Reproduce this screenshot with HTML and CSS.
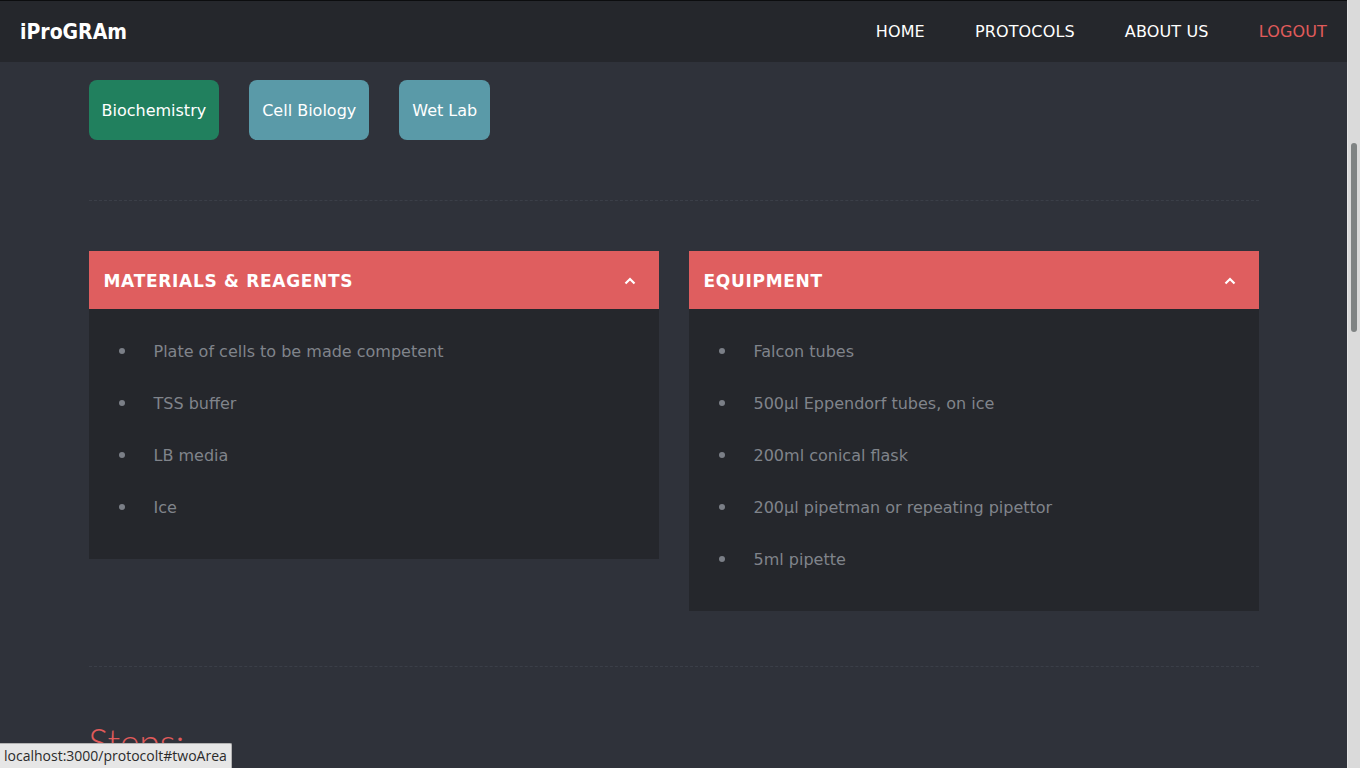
FILE: index.html
```html
<!DOCTYPE html>
<html lang="en">
<head>
<meta charset="utf-8">
<title>iProGRAm – Protocol</title>
<link rel="stylesheet" href="styles.css">
</head>
<body>
  <div class="page">
    <header class="topbar">
      <a class="logo" href="#">iProGRAm</a>
      <nav class="nav">
        <a href="#">HOME</a>
        <a href="#">PROTOCOLS</a>
        <a href="#">ABOUT US</a>
        <a href="#" class="logout">LOGOUT</a>
      </nav>
    </header>

    <main class="container">
      <div class="tags">
        <a class="tag tag-green" href="#">Biochemistry</a>
        <a class="tag tag-teal" href="#">Cell Biology</a>
        <a class="tag tag-teal" href="#">Wet Lab</a>
      </div>

      <hr class="divider divider-top">

      <div class="panels">
        <section class="panel">
          <div class="panel-head">
            <h2>MATERIALS &amp; REAGENTS</h2>
            <svg class="chev" width="12" height="8" viewBox="0 0 12 8"><path d="M1.5 6.5 L6 2 L10.5 6.5" fill="none" stroke="#fff" stroke-width="2.2"/></svg>
          </div>
          <ul class="panel-body">
            <li>Plate of cells to be made competent</li>
            <li>TSS buffer</li>
            <li>LB media</li>
            <li>Ice</li>
          </ul>
        </section>
        <section class="panel">
          <div class="panel-head">
            <h2>EQUIPMENT</h2>
            <svg class="chev" width="12" height="8" viewBox="0 0 12 8"><path d="M1.5 6.5 L6 2 L10.5 6.5" fill="none" stroke="#fff" stroke-width="2.2"/></svg>
          </div>
          <ul class="panel-body">
            <li>Falcon tubes</li>
            <li>500µl Eppendorf tubes, on ice</li>
            <li>200ml conical flask</li>
            <li>200µl pipetman or repeating pipettor</li>
            <li>5ml pipette</li>
          </ul>
        </section>
      </div>

      <hr class="divider divider-bottom">

      <h1 class="steps-title">Steps:</h1>
    </main>
  </div>

  <div class="scrollbar"><div class="thumb"></div></div>

  <div class="status">localhost:3000/protocolt#twoArea</div>
</body>
</html>
```

FILE: styles.css
```css
* { box-sizing: border-box; }

html, body {
  margin: 0;
  height: 100%;
}

body {
  display: flex;
  height: 100vh;
  overflow: hidden;
  background: #2f323a;
  font-family: "DejaVu Sans", "Liberation Sans", sans-serif;
  font-size: 16px;
  color: #80848b;
}

a { text-decoration: none; color: inherit; }

.page {
  flex: 1;
  display: flex;
  flex-direction: column;
  overflow: hidden;
  min-width: 0;
}

/* top bar */
.topbar {
  flex: none;
  height: 62px;
  border-top: 1px solid #0c0d0f;
  background: #25272c;
  display: flex;
  align-items: center;
  justify-content: space-between;
  padding: 0 20px 0 20px;
}

.logo {
  font-family: "DejaVu Sans Condensed", "DejaVu Sans", sans-serif;
  font-stretch: condensed;
  font-weight: bold;
  font-size: 21px;
  color: #ffffff;
}

.nav {
  display: flex;
  gap: 50px;
  font-size: 16px;
  letter-spacing: 0.15px;
}

.nav a { color: #ffffff; }
.nav a.logout { color: #e05b5b; }

/* content */
.container {
  width: 1170px;
  margin: 0 auto;
  padding-top: 18px;
}

.tags {
  display: flex;
  gap: 30px;
}

.tag {
  height: 60px;
  line-height: 61px;
  padding: 0 13px;
  border-radius: 8px;
  color: #ffffff;
  font-size: 16px;
}

.tag-green { background: #21805e; }
.tag-teal { background: #5a9aa8; }

.divider {
  border: 0;
  border-top: 1px dashed #3b3f48;
  margin: 0;
}

.divider-top { margin-top: 60px; margin-bottom: 50px; }
.divider-bottom { margin-top: 55px; }

.panels {
  display: grid;
  grid-template-columns: 1fr 1fr;
  gap: 30px;
  align-items: start;
}

.panel-head {
  height: 58px;
  background: #df5e5f;
  display: flex;
  align-items: center;
  justify-content: space-between;
  padding: 1px 23px 0 15px;
}

.panel-head h2 {
  margin: 0;
  font-size: 17px;
  font-weight: bold;
  color: #ffffff;
  letter-spacing: 0.7px;
}

.chev { display: block; }

.panel-body {
  list-style: none;
  margin: 0;
  padding: 16px 0 26px 30px;
  background: #25272c;
}

.panel-body li {
  display: flex;
  align-items: center;
  height: 52px;
}

.panel-body li::before {
  content: "";
  flex: none;
  width: 6px;
  height: 6px;
  border-radius: 50%;
  background: #7b7f87;
  margin-right: 29px;
}

.steps-title {
  margin: 55px 0 0 0;
  font-family: Lato, "Open Sans", sans-serif;
  font-weight: 300;
  font-size: 37px;
  line-height: 40px;
  color: #e05b5b;
}

/* scrollbar column */
.scrollbar {
  flex: none;
  width: 13px;
  background: #dadada;
  border-left: 1px solid #e8e8e8;
  padding: 143px 0 0 3px;
}

.thumb {
  width: 6px;
  height: 189px;
  border-radius: 3px;
  background: #7f8383;
}

/* link status bubble */
.status {
  position: fixed;
  left: 0;
  bottom: 0;
  height: 25px;
  padding: 0 4px 0 4px;
  line-height: 24px;
  background: #e6e6e6;
  border-top: 1px solid #b3b3b3;
  border-right: 1px solid #b3b3b3;
  border-top-right-radius: 2px;
  font-family: "Open Sans", "DejaVu Sans", sans-serif;
  font-size: 14px;
  color: #2b2b2b;
}
```
